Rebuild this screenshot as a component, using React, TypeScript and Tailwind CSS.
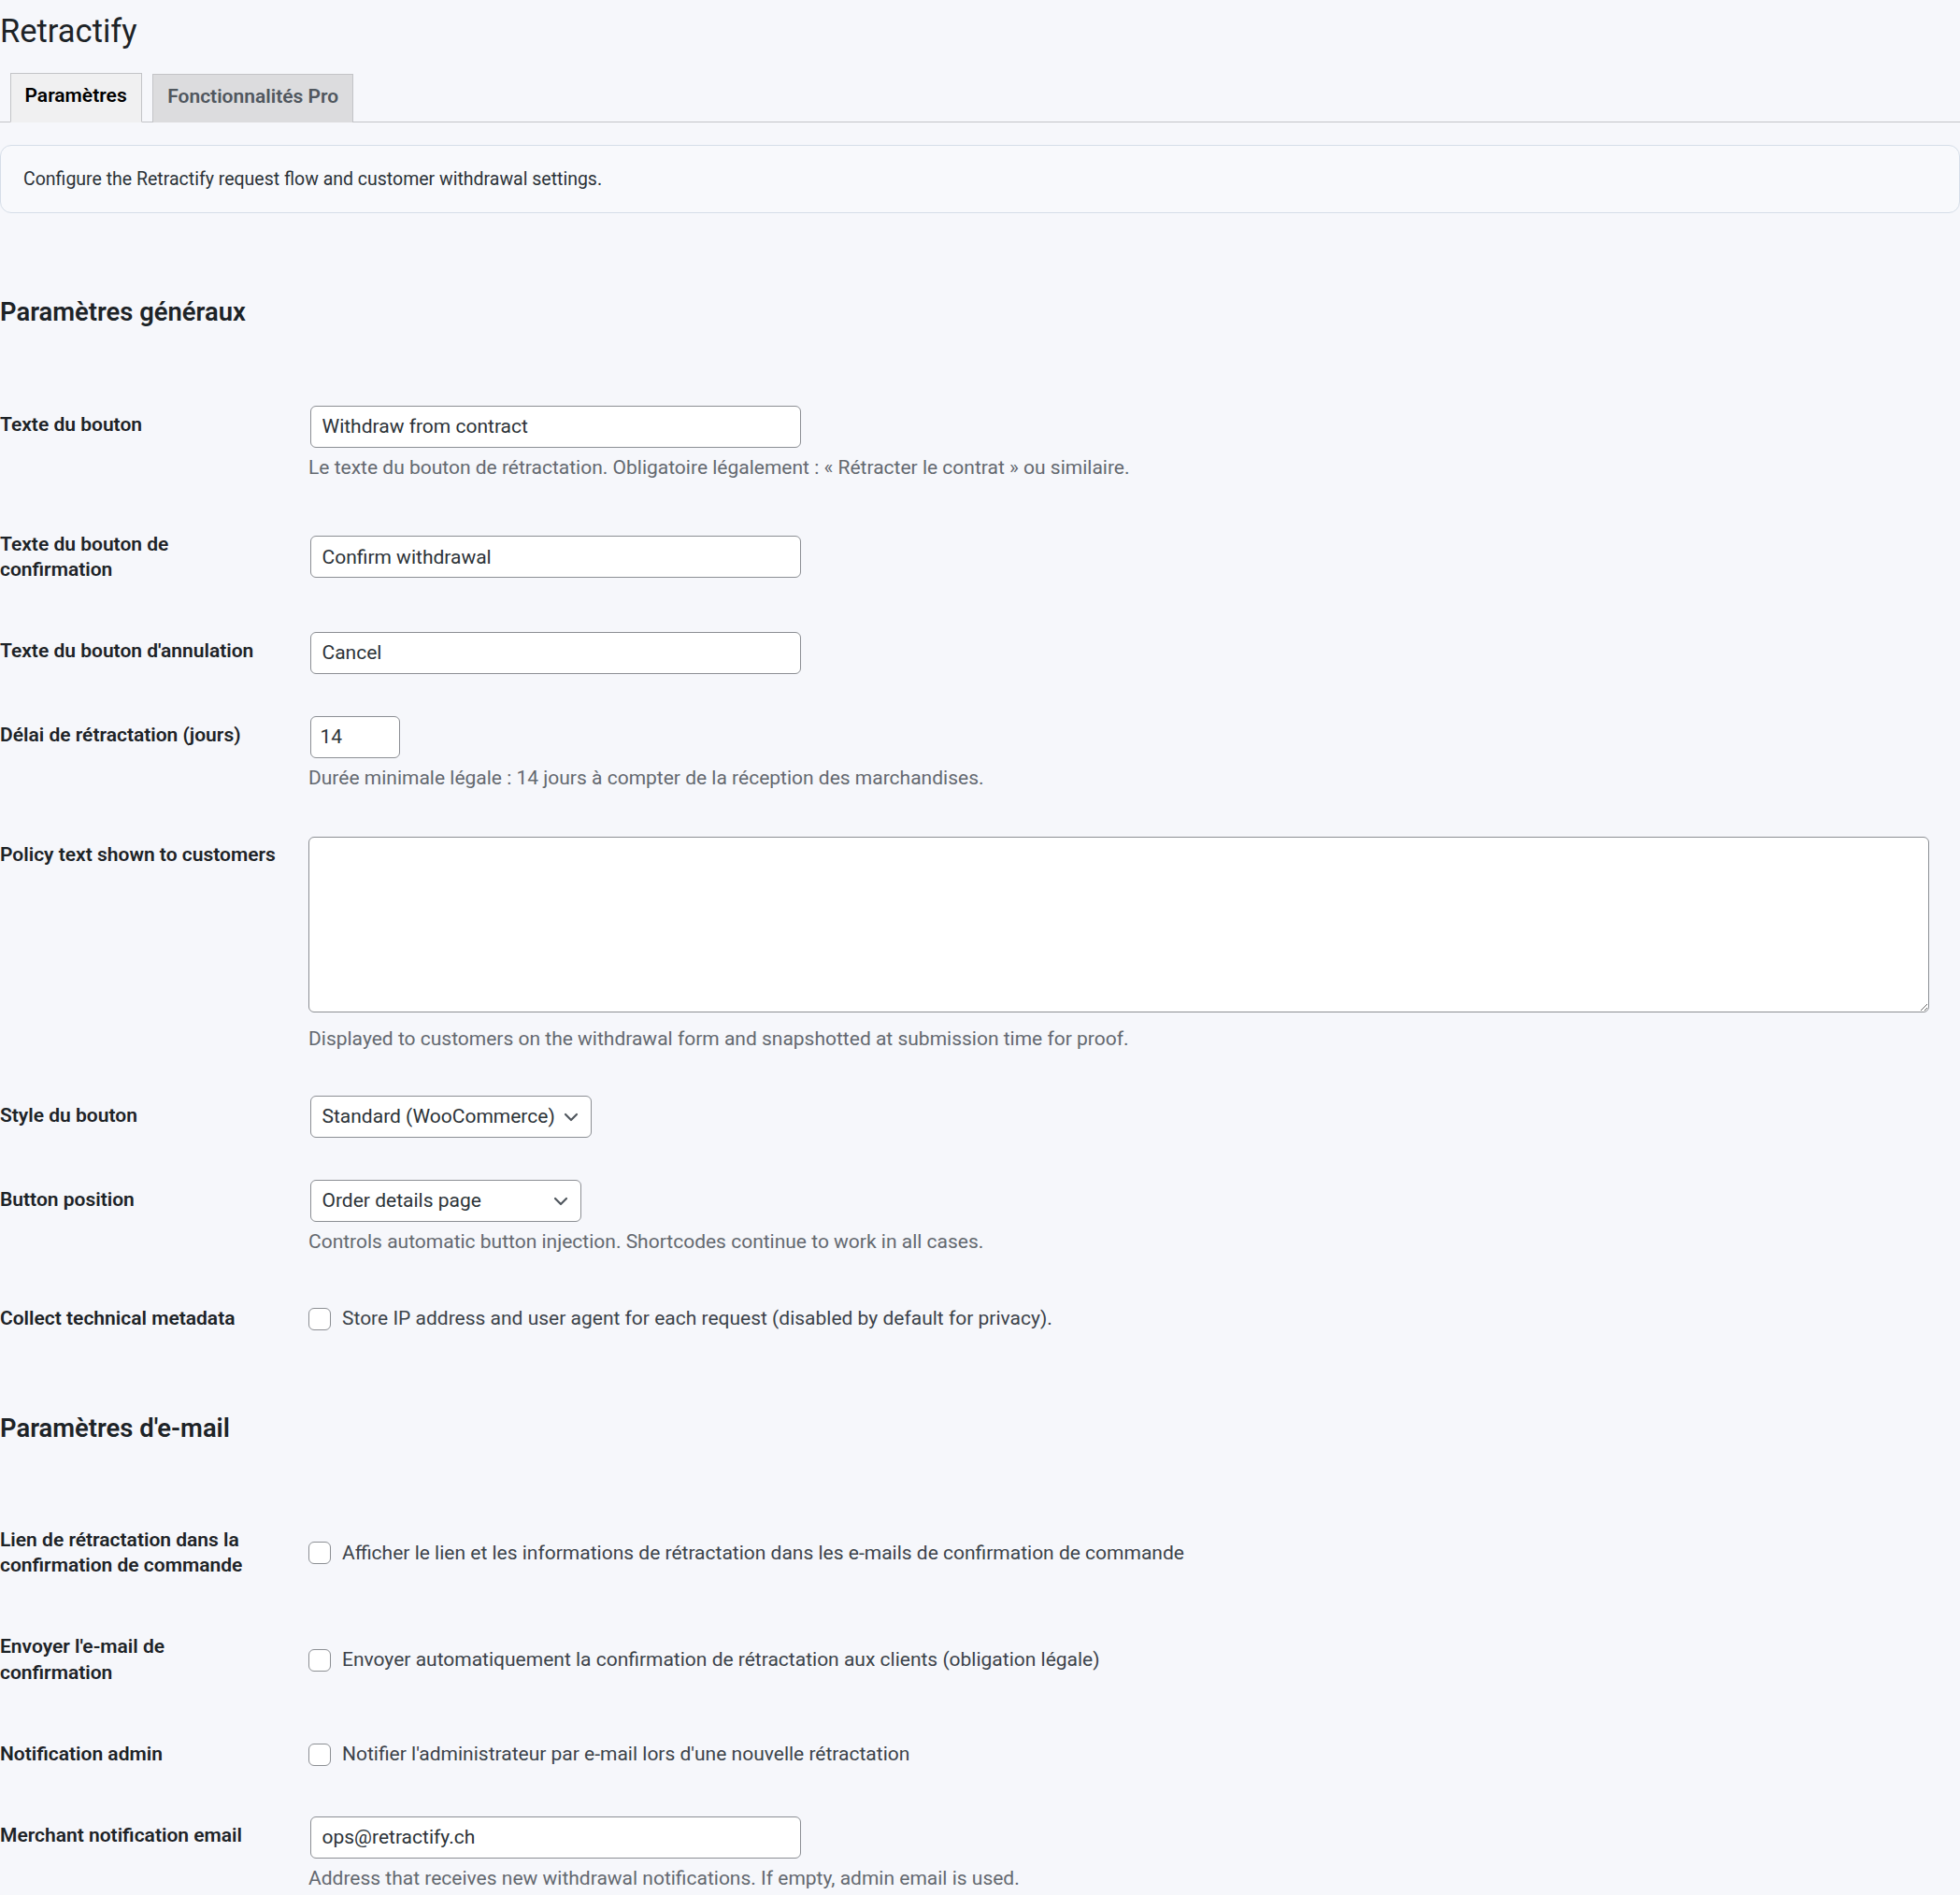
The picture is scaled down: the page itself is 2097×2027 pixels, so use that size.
import React from 'react';

const Chevron: React.FC = () => (
    <svg viewBox="0 0 20 20" className="w-[24px] h-[24px] absolute right-[9px] top-1/2 -translate-y-1/2 pointer-events-none">
        <path d="M5 7.5l5 5 5-5" fill="none" stroke="#50575e" strokeWidth="1.8" strokeLinecap="round" strokeLinejoin="round" />
    </svg>
);

const TextInput: React.FC<{ value: string; width?: string }> = ({ value, width = 'w-[525px]' }) => (
    <input
        readOnly
        value={value}
        className={`${width} block ml-[1.5px] h-[45px] px-[12px] bg-white border border-[#8c8f94] rounded-[6px] text-[21px] text-[#2c3338] outline-none`}
    />
);

const Select: React.FC<{ value: string; width: string }> = ({ value, width }) => (
    <div className={`${width} relative ml-[1.5px] h-[45px] flex items-center pl-[12px] bg-white border border-[#8c8f94] rounded-[6px] text-[21px] text-[#2c3338]`}>
        <span>{value}</span>
        <Chevron />
    </div>
);

const Desc: React.FC<{ children: React.ReactNode; className?: string }> = ({ children, className = 'mt-[6px]' }) => (
    <p className={`${className} text-[21px] leading-[31.5px] text-[#646970]`}>{children}</p>
);

const Check: React.FC<{ label: string }> = ({ label }) => (
    <label className="flex items-center gap-[12px] text-[21px] leading-[27.3px] text-[#3c434a]">
        <input type="checkbox" className="appearance-none w-[24px] h-[24px] shrink-0 bg-white border border-[#8c8f94] rounded-[6px]" />
        <span>{label}</span>
    </label>
);

const Row: React.FC<{ label: React.ReactNode; children: React.ReactNode }> = ({ label, children }) => (
    <div className="flex">
        <div className="w-[315px] shrink-0 self-start py-[30px] pr-[15px] text-[21px] leading-[27.3px] font-semibold text-[#1d2327]">
            {label}
        </div>
        <div className="flex-1 self-center py-[22.5px] px-[15px]">{children}</div>
    </div>
);

const SectionTitle: React.FC<{ children: React.ReactNode; className: string }> = ({ children, className }) => (
    <h2 className={`${className} text-[27.4px] leading-[35.5px] font-semibold text-[#1d2327]`}>{children}</h2>
);

export default function App() {
    return (
        <div className="min-h-screen bg-[#f6f7fb] text-[#3c434a] font-['Roboto','Liberation_Sans',sans-serif] pt-[10.5px]">
            <h1 className="text-[34.5px] leading-[45px] font-normal text-[#1d2327]">Retractify</h1>

            <nav className="mt-[22.5px] flex items-end border-b border-[#c3c4c7]">
                <span className="ml-[10.5px] -mb-px px-[15px] pt-[5px] pb-[10px] border border-[#c3c4c7] bg-[#f0f0f1] border-b-[#f0f0f1] text-[21px] leading-[36px] font-semibold text-black">
                    Paramètres
                </span>
                <span className="ml-[11.5px] -mb-px px-[15px] pt-[5px] pb-[10px] border border-[#c3c4c7] border-b-0 bg-[#dcdcde] text-[21px] leading-[36px] font-semibold text-[#50575e]">
                    Fonctionnalités Pro
                </span>
            </nav>

            <div className="mt-[24px] border border-[#d6dee8] rounded-[12px] bg-[#f8f9fc] px-[24px] py-[20px]">
                <p className="text-[19.5px] leading-[31px] text-[#2c3338]">
                    Configure the Retractify request flow and customer withdrawal settings.
                </p>
            </div>

            <SectionTitle className="mt-[89px]">Paramètres généraux</SectionTitle>

            <div className="mt-[58.5px]">
                <Row label="Texte du bouton">
                    <TextInput value="Withdraw from contract" />
                    <Desc>Le texte du bouton de rétractation. Obligatoire légalement : « Rétracter le contrat » ou similaire.</Desc>
                </Row>
                <Row label={<>Texte du bouton de<br />confirmation</>}>
                    <TextInput value="Confirm withdrawal" />
                </Row>
                <Row label="Texte du bouton d'annulation">
                    <TextInput value="Cancel" />
                </Row>
                <Row label="Délai de rétractation (jours)">
                    <TextInput value="14" width="w-[96px] !px-[10px]" />
                    <Desc>Durée minimale légale : 14 jours à compter de la réception des marchandises.</Desc>
                </Row>
                <Row label="Policy text shown to customers">
                    <textarea
                        readOnly
                        className="block mt-[1.5px] w-[99%] h-[188px] bg-white border border-[#8c8f94] rounded-[6px] outline-none"
                    />
                    <Desc className="mt-[13px]">Displayed to customers on the withdrawal form and snapshotted at submission time for proof.</Desc>
                </Row>
                <Row label="Style du bouton">
                    <Select value="Standard (WooCommerce)" width="w-[301px]" />
                </Row>
                <Row label="Button position">
                    <Select value="Order details page" width="w-[290px]" />
                    <Desc>Controls automatic button injection. Shortcodes continue to work in all cases.</Desc>
                </Row>
                <Row label="Collect technical metadata">
                    <Check label="Store IP address and user agent for each request (disabled by default for privacy)." />
                </Row>
            </div>

            <SectionTitle className="mt-[57px]">Paramètres d'e-mail</SectionTitle>

            <div className="mt-[57px]">
                <Row label={<>Lien de rétractation dans la<br />confirmation de commande</>}>
                    <Check label="Afficher le lien et les informations de rétractation dans les e-mails de confirmation de commande" />
                </Row>
                <Row label={<>Envoyer l'e-mail de<br />confirmation</>}>
                    <Check label="Envoyer automatiquement la confirmation de rétractation aux clients (obligation légale)" />
                </Row>
                <Row label="Notification admin">
                    <Check label="Notifier l'administrateur par e-mail lors d'une nouvelle rétractation" />
                </Row>
                <Row label="Merchant notification email">
                    <TextInput value="ops@retractify.ch" />
                    <Desc>Address that receives new withdrawal notifications. If empty, admin email is used.</Desc>
                </Row>
            </div>
        </div>
    );
}
